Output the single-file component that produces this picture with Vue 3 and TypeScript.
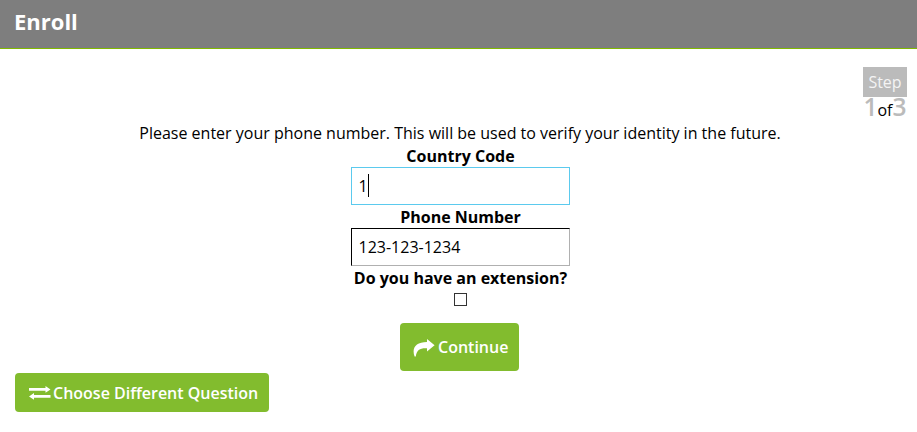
<script setup lang="ts">
import { ref } from 'vue'

const countryCode = ref<string>('1')
const phoneNumber = ref<string>('123-123-1234')
const hasExtension = ref<boolean>(false)
const step = 1
const totalSteps = 3
</script>

<template>
  <div class="page">
    <header class="header">
      <h1 class="title">Enroll</h1>
    </header>
    <div class="steps">
      <div class="step-label">Step</div>
      <div class="step-count"><b>{{ step }}</b><span>of</span><b>{{ totalSteps }}</b></div>
    </div>
    <form class="form" @submit.prevent>
      <p class="intro">Please enter your phone number. This will be used to verify your identity in the future.</p>
      <label class="label" for="country">Country Code</label>
      <div class="field">
        <input id="country" v-model="countryCode" class="input active" type="text">
        <span class="caret"></span>
      </div>
      <label class="label" for="phone">Phone Number</label>
      <div class="field">
        <input id="phone" v-model="phoneNumber" class="input" type="text">
      </div>
      <label class="label" for="extension">Do you have an extension?</label>
      <input id="extension" v-model="hasExtension" class="check" type="checkbox">
      <button class="button continue" type="submit">
        <svg class="icon-forward" width="22" height="18" viewBox="0 0 22 18">
          <path d="M14 0 L21.6 6.2 L14 12.5 V9.2 C7.5 8.8 3.5 10.5 2.8 17.6 H1.6 C-1.6 9 3 3 14 3 Z" fill="currentColor" />
        </svg>
        <span>Continue</span>
      </button>
    </form>
    <button class="button choose" type="button">
      <svg class="icon-swap" width="22" height="14" viewBox="0 0 22 14">
        <path d="M0 2 H16.5 V0 L21.5 3.4 L16.5 6.8 V4.8 H0 Z M21.5 9 H5 V7 L0 10.4 L5 13.8 V11.8 H21.5 Z" fill="currentColor" />
      </svg>
      <span>Choose Different Question</span>
    </button>
  </div>
</template>

<style>
body {
  background: #fff;
}
</style>

<style scoped>
.page {
  display: flex;
  flex-direction: column;
  height: 432px;
  overflow: hidden;
  color: #000;
  font: 16px/23px "Open Sans", "Noto Sans", sans-serif;
}

.header {
  box-sizing: border-box;
  height: 49px;
  padding: 6px 14px;
  background: #7e7e7e;
  border-bottom: 1px solid #80b800;
}

.title {
  margin: 0;
  color: #fff;
  font-size: 22px;
  font-weight: 700;
  line-height: 30px;
}

.steps {
  align-self: flex-end;
  width: 44px;
  height: 54px;
  margin: 18px 10px 0 0;
  text-align: center;
}

.step-label {
  height: 30px;
  background: #bbb;
  color: #f4f4f4;
  line-height: 30px;
}

.step-count {
  display: flex;
  align-items: baseline;
  justify-content: center;
  line-height: 20px;
}

.step-count b {
  color: #bbb;
  font-size: 24.5px;
  font-weight: 600;
}

.form {
  display: flex;
  flex-direction: column;
  align-items: center;
  padding-left: 3px;
}

.intro {
  height: 22px;
  margin: 0;
  padding: 1px 0 0;
  line-height: 23px;
  white-space: nowrap;
}

.label {
  box-sizing: border-box;
  height: 23px;
  padding: 1px 0 0 1px;
  font-weight: 700;
}

.field {
  position: relative;
  width: 219px;
  height: 38px;
}

.input {
  box-sizing: border-box;
  width: 219px;
  height: 38px;
  margin: 0;
  padding: 0 7px;
  display: block;
  border: 1px solid;
  border-color: #000 #b0b0b0 #b0b0b0 #000;
  border-radius: 0;
  outline: none;
  background: #fff;
  color: #000;
  font: inherit;
}

.input.active {
  border-color: #5bcaee;
}

.caret {
  position: absolute;
  top: 7px;
  left: 17px;
  width: 1px;
  height: 23px;
  background: #000;
}

.check {
  appearance: none;
  box-sizing: border-box;
  width: 13px;
  height: 13px;
  margin: 4px 0 17px;
  border: 1px solid #333;
  background: #fff;
}

.button {
  display: flex;
  align-items: center;
  box-sizing: border-box;
  border: 0;
  border-radius: 4px;
  background: #82bc2e;
  color: #fff;
  font: 600 16px/23px "Open Sans", "Noto Sans", sans-serif;
  white-space: nowrap;
}

.continue {
  width: 119px;
  height: 48px;
  margin-right: 1px;
  padding: 0 0 0 13px;
  gap: 3px;
}

.icon-forward {
  margin-top: 2px;
}

.choose {
  align-self: flex-start;
  width: 254px;
  height: 39px;
  margin: 2px 0 0 15px;
  padding: 1px 0 0 14px;
  gap: 2px;
}

.icon-forward,
.icon-swap {
  flex: none;
}
</style>
